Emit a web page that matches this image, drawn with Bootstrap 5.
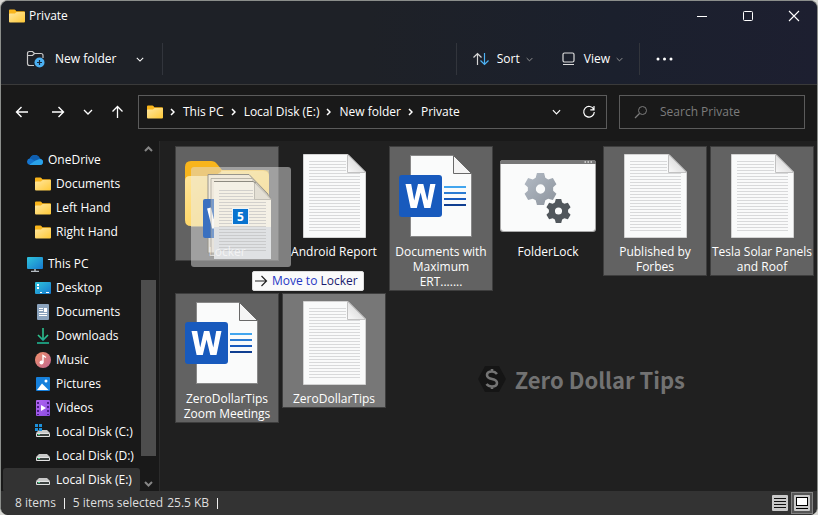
<!DOCTYPE html>
<html lang="en">
<head>
<meta charset="utf-8">
<meta name="viewport" content="width=device-width, initial-scale=1">
<title>Private</title>
<link href="https://cdn.jsdelivr.net/npm/bootstrap@5.3.0/dist/css/bootstrap.min.css" rel="stylesheet">
<style>
html { background: #d8d8d4; }
body { height: 100vh; background: transparent; font-family: "Open Sans", "Noto Sans", sans-serif; font-size: 12px; line-height: 16px; color: #fff; }
svg { display: block; flex: none; }
button { background: none; border: 0; padding: 0; color: inherit; }
a { color: inherit; text-decoration: none; }
.window { background: #191919; border: 1px solid #8b8e8b; border-bottom: 0; border-radius: 8px; }
.topbar { background: linear-gradient(90deg, #1e2127 45%, #1b202d 75%, #1d1f30); border-bottom: 1px solid #3a3a3a; }
.titlebar { height: 29px; padding: 0 17px 0 8px; }
.caption-btns { gap: 34px; }
.commands { height: 54px; padding: 4px 144px 0 25px; }
.divider { width: 1px; height: 32px; background: #32353c; }
.new-btn { gap: 10px; }
.new-caret { margin: 0 2px 0 10px; }
.drop-btn { gap: 6px; }
.drop-icon { margin-right: 2px; }
.dim { color: #a0a0a0; }
.addressrow { height: 56px; padding: 0 12px 2px 14px; gap: 12px; }
.arrows { gap: 18px; width: 111px; }
.box { height: 34px; border: 1px solid #5b5b5b; }
.crumbs { padding-left: 8px; padding-right: 10px; }
.crumbs ol { font-size: 12px; }
.crumbs li { gap: 8px; margin-left: 7px; }
.history { margin-right: 21px; }
.search { width: 186px; padding-left: 14px; gap: 12px; }
.search input { background: none; border: 0; outline: 0; color: #fff; width: 100%; padding: 0; }
.search input::placeholder { color: #7c7c7c; opacity: 1; }
.sidebar { width: 159px; border-right: 1px solid #2b2b2b; }
.tree { padding: 7px 0 0 2px; }
.tree a { display: flex; align-items: center; height: 24px; gap: 5px; padding-left: 32px; white-space: nowrap; border-radius: 3px; }
.tree a.root { padding-left: 24px; }
.tree .group-gap { margin-top: 8px; }
.tree a.active { background: #333; }
.scroll { width: 19px; padding: 5px 3px 4px 1px; }
.track-top { flex: 127 0 0; }
.thumb { flex: 173 0 0; background: #4d4d4d; }
.track-end { flex: 25 0 0; }
.files { background: #202020; padding: 5px 2px 0 15px; }
.tiles { display: grid; grid-template-columns: repeat(auto-fill, 104px); gap: 2px 3px; align-items: start; }
.tile { padding: 0 0 1px; border: 1px solid transparent; text-align: center; line-height: 15px; overflow-wrap: break-word; }
.tile svg { margin: 0 auto 1px; }
.tile.selected { background: #626262; border-color: #3e3e3e; }
.tile.current { background: #777; }
.tile .faint { position: relative; z-index: 3; color: rgba(255, 255, 255, .6); }
.ghost { left: 15px; top: 20px; z-index: 2; }
.tip { left: 76px; top: 124px; height: 20px; padding: 0 5px 0 1px; gap: 4px; z-index: 3; background: #fafafa; border: 1px solid #ddd; border-radius: 2px; color: #2638c4; white-space: nowrap; }
.tip b { font-weight: 400; color: #1b1b6e; }
.brand-mark { right: 132px; bottom: 95px; gap: 8px; color: #727272; font-family: "Noto Sans CJK SC", sans-serif; font-weight: 700; font-size: 22px; line-height: 34px; }
.status { height: 24px; background: #333; color: #dedede; padding: 0 4px 0 14px; border-radius: 0 0 8px 8px; }
.status .bar { width: 1px; height: 11px; background: #eee; }
.mode { width: 22px; height: 22px; display: grid; place-items: center; }
.mode.on { background: #555; border: 1px solid #818181; }
</style>
<script src="https://cdn.jsdelivr.net/npm/bootstrap@5.3.0/dist/js/bootstrap.bundle.min.js"></script>
</head>
<body class="m-0 overflow-hidden">
<svg width="0" height="0" class="position-absolute" aria-hidden="true">
  <defs>
    <linearGradient id="gFold" x1="0" y1="0" x2="1" y2="1"><stop offset="0" stop-color="#ffe7a0"/><stop offset="1" stop-color="#ffc937"/></linearGradient>
    <linearGradient id="gCurl" x1="0" y1="1" x2="1" y2="0"><stop offset="0" stop-color="#fafafa"/><stop offset="1" stop-color="#c9c9c9"/></linearGradient>
    <linearGradient id="gPc" x1="0" y1="0" x2="1" y2="1"><stop offset="0" stop-color="#2fc4dc"/><stop offset="1" stop-color="#1779cf"/></linearGradient>
    <linearGradient id="gMus" x1="0" y1="0" x2="1" y2="1"><stop offset="0" stop-color="#f0906a"/><stop offset="1" stop-color="#bf6690"/></linearGradient>
    <linearGradient id="gVid" x1="0" y1="0" x2="1" y2="1"><stop offset="0" stop-color="#b266f2"/><stop offset="1" stop-color="#8a4be0"/></linearGradient>
    <linearGradient id="gDown" x1="0" y1="0" x2="0" y2="1"><stop offset="0" stop-color="#2fcb8c"/><stop offset="1" stop-color="#1fa596"/></linearGradient>
    <linearGradient id="gGear" x1="0" y1="0" x2="1" y2="1"><stop offset="0" stop-color="#b4bcc6"/><stop offset="1" stop-color="#8d949d"/></linearGradient>
    <symbol id="folder" viewBox="0 0 16 14"><path d="M0 3V1.500Q0 .5 1 .5H5.400Q6 .5 6.400 1L7.400 2.200H15Q16 2.200 16 3.200V6H0Z" fill="#f9b51b"/><path d="M0 5.200Q0 4.400 .8 4.400H5.300Q6 4.400 6.500 3.900L7.200 3.300Q7.400 3.100 8 3.100H15.200Q16 3.100 16 3.900V12.400Q16 13.400 15 13.400H1Q0 13.400 0 12.400Z" fill="url(#gFold)"/></symbol>
    <symbol id="text-doc" viewBox="0 0 96 96"><path d="M17.500 7.500H62L79.500 25V90.500H17.500Z" fill="#f9fafa" stroke="#d2d2d2"/><path d="M23 14H60M23 17H60M23 20H60M23 23H60M23 26H74M23 29H74M23 32H74M23 35H74M23 38H74M23 41H74M23 44H74M23 47H74M23 50H74M23 53H74M23 56H74M23 59H74M23 62H74M23 65H74M23 68H74M23 71H74M23 74H74M23 77H74M23 80H74M23 83H74" transform="translate(0 .5)" stroke="#d8d9da"/><path d="M61.500 7.500V25.500H79.500Z" fill="url(#gCurl)" stroke="#c2c2c2"/></symbol>
    <symbol id="word-doc" viewBox="0 0 96 96"><path d="M17.500 8.500H60.500L78.500 26.500V89.500H17.500Z" fill="#fafbfb" stroke="#888"/><path d="M60.500 8.500V26.500H78.500Z" fill="#f4f4f4" stroke="#696969"/><path d="M51 40H73" stroke="#41a5ee" stroke-width="2"/><path d="M51 46H73" stroke="#2b7cd3" stroke-width="2"/><path d="M51 52H73" stroke="#185abd" stroke-width="2"/><path d="M51 58H73" stroke="#103f91" stroke-width="2"/><rect x="6" y="28" width="43" height="42" rx="3" fill="#185abd"/><path d="M12.500 37H18.200L21.200 53.500L25 37H30.300L34.300 53.500L37.200 37H42.500L37.500 61H31.300L27.600 45.500L23.800 61H17.600Z" fill="#fff"/></symbol>
    <symbol id="drive" viewBox="0 0 16 16"><path d="M4 6H12L15 9H1Z" fill="#c8c8c8"/><rect x="1" y="9" width="14" height="4" rx="1" fill="#e2e2e2"/><rect x="2" y="10" width="12" height="2" fill="#3c4240"/><rect x="3" y="10" width="2" height="1" fill="#41d58a"/></symbol>
    <symbol id="chev" viewBox="0 0 10 6"><path d="M1 1L5 5L9 1" fill="none" stroke="currentColor" stroke-width="1.300"/></symbol>
    <symbol id="gear" viewBox="-12 -12 24 24"><path fill-rule="evenodd" d="M-2.600-11.600H2.600L3.500-8.200L5.600-7L9-8L11.600-3.500L9.200-1.200V1.200L11.600 3.500L9 8L5.600 7L3.500 8.200L2.600 11.600H-2.600L-3.500 8.200L-5.600 7L-9 8L-11.600 3.500L-9.200 1.200V-1.200L-11.600-3.500L-9-8L-5.600-7L-3.500-8.200ZM0-3.400A3.400 3.400 0 1 0 0 3.400A3.400 3.400 0 1 0 0-3.400Z"/></symbol>
  </defs>
</svg>
<div class="window d-flex flex-column vh-100 overflow-hidden">
  <header class="topbar">
    <div class="titlebar d-flex align-items-center justify-content-between">
      <div class="d-flex align-items-center gap-1"><svg width="16" height="14"><use href="#folder"/></svg><span>Private</span></div>
      <div class="caption-btns d-flex align-items-center">
        <button type="button" aria-label="Minimize"><svg width="12" height="12"><path d="M1 6.500H11" stroke="#fff"/></svg></button>
        <button type="button" aria-label="Maximize"><svg width="12" height="12"><rect x="1.500" y="1.500" width="9" height="9" rx="1" fill="none" stroke="#fff"/></svg></button>
        <button type="button" aria-label="Close"><svg width="12" height="12"><path d="M1 1L11 11M11 1L1 11" stroke="#fff" stroke-width="1.100"/></svg></button>
      </div>
    </div>
    <div class="commands d-flex align-items-center">
      <button type="button" class="new-btn d-flex align-items-center">
        <svg width="19" height="18"><path d="M8 15.500H3.500Q1.500 15.500 1.500 13.500V3.500Q1.500 1.500 3.500 1.500H6.500L8.500 3.500H15Q17 3.500 17 5.500V8M1.500 5.500H6.500L8.500 3.500" fill="none" stroke="#c9c9c9" stroke-width="1.200"/><circle cx="13.500" cy="12.500" r="5" fill="#4cb1f3"/><path d="M13.500 10V15M11 12.500H16" stroke="#17273a" stroke-width="1.200"/></svg>
        <span>New folder</span>
        <svg class="new-caret" width="8" height="5"><use href="#chev"/></svg>
      </button>
      <span class="divider ms-3"></span>
      <span class="divider ms-auto"></span>
      <button type="button" class="drop-btn d-flex align-items-center ms-3">
        <svg class="drop-icon" width="16" height="14"><path d="M4.500 13V1.500M.5 5.500L4.500 1.500L8.500 5.500" fill="none" stroke="#d5d5d5" stroke-width="1.200"/><path d="M11.500 1V12.500M7.500 8.500L11.500 12.500L15.500 8.500" fill="none" stroke="#4cb1f3" stroke-width="1.200"/></svg>
        <span>Sort</span><svg width="7" height="5" class="dim"><use href="#chev"/></svg>
      </button>
      <button type="button" class="drop-btn d-flex align-items-center ms-4 ps-1">
        <svg class="drop-icon" width="15" height="14"><rect x="2" y="1" width="11" height="9" rx="1.500" fill="none" stroke="#ddd" stroke-width="1.200"/><path d="M2 12.500H13" stroke="#ddd"/></svg>
        <span>View</span><svg width="7" height="5" class="dim"><use href="#chev"/></svg>
      </button>
      <span class="divider ms-3"></span>
      <button type="button" class="ms-3" aria-label="See more"><svg width="17" height="4"><path d="M2 2H2.010M8.500 2H8.510M15 2H15.010" stroke="#fff" stroke-width="3" stroke-linecap="round"/></svg></button>
    </div>
  </header>

  <div class="addressrow d-flex align-items-center">
    <div class="arrows d-flex align-items-center">
      <button type="button" aria-label="Back"><svg width="14" height="12"><path d="M13 6H2M6.500 1L1.500 6L6.500 11" fill="none" stroke="#fff" stroke-width="1.400"/></svg></button>
      <button type="button" class="ms-1" aria-label="Forward"><svg width="14" height="12"><path d="M1 6H12M7.500 1L12.500 6L7.500 11" fill="none" stroke="#fff" stroke-width="1.400"/></svg></button>
      <button type="button" aria-label="Recent locations"><svg width="10" height="6"><use href="#chev"/></svg></button>
      <button type="button" aria-label="Up"><svg width="13" height="14"><path d="M6.500 13V2M1.500 6.500L6.500 1.500L11.500 6.500" fill="none" stroke="#fff" stroke-width="1.300"/></svg></button>
    </div>
    <nav class="box crumbs flex-grow-1 d-flex align-items-center" aria-label="Address">
      <svg width="16" height="14"><use href="#folder"/></svg>
      <ol class="list-unstyled d-flex mb-0">
        <li class="d-flex align-items-center"><svg width="5" height="8"><path d="M1 1L4 4L1 7" fill="none" stroke="#fff" stroke-width="1.500"/></svg><a href="#">This PC</a></li>
        <li class="d-flex align-items-center"><svg width="5" height="8"><path d="M1 1L4 4L1 7" fill="none" stroke="#fff" stroke-width="1.500"/></svg><a href="#">Local Disk (E:)</a></li>
        <li class="d-flex align-items-center"><svg width="5" height="8"><path d="M1 1L4 4L1 7" fill="none" stroke="#fff" stroke-width="1.500"/></svg><a href="#">New folder</a></li>
        <li class="d-flex align-items-center"><svg width="5" height="8"><path d="M1 1L4 4L1 7" fill="none" stroke="#fff" stroke-width="1.500"/></svg><a href="#">Private</a></li>
      </ol>
      <button type="button" class="history ms-auto" aria-label="Previous locations"><svg width="9" height="6"><use href="#chev"/></svg></button>
      <button type="button" aria-label="Refresh"><svg width="14" height="14"><path d="M11.800 4.500A5.300 5.300 0 1 0 12.300 7M12 1V4.800H8.300" fill="none" stroke="#fff" stroke-width="1.200"/></svg></button>
    </nav>
    <label class="box search d-flex align-items-center">
      <svg width="14" height="14"><circle cx="8.500" cy="5.500" r="4" fill="none" stroke="#7c7c7c"/><path d="M5.500 8.500L1 13" stroke="#7c7c7c" stroke-width="1.200"/></svg>
      <input type="search" placeholder="Search Private" aria-label="Search Private">
    </label>
  </div>

  <main class="d-flex flex-grow-1 overflow-hidden">
    <div class="sidebar d-flex flex-shrink-0">
      <nav class="tree flex-grow-1 overflow-hidden" aria-label="Folders">
        <a class="root" href="#"><svg width="16" height="16"><path d="M3.500 13Q0 12.500 0 9.500Q.3 6.800 3 6.300Q4.500 3 8 3Q11.500 3 12.800 6.500Q16 7.300 16 10Q15.800 12.800 13 13Z" fill="#1474ce"/><path d="M3 6.300Q4.500 3 8 3Q11.500 3 12.800 6.500L8 9Z" fill="#0f5fb0"/><path d="M2.500 12.800L8 8.700L13 7Q16 7.500 16 10Q15.800 12.800 13 13H3.500Z" fill="#2aa3ea"/></svg>OneDrive</a>
        <a href="#"><svg width="16" height="14"><use href="#folder"/></svg>Documents</a>
        <a href="#"><svg width="16" height="14"><use href="#folder"/></svg>Left Hand</a>
        <a href="#"><svg width="16" height="14"><use href="#folder"/></svg>Right Hand</a>
        <a class="root group-gap" href="#"><svg width="16" height="16"><rect y="1" width="16" height="12" rx="1" fill="url(#gPc)"/><path d="M8 13V15M4 15.500H12" stroke="#b5bcc2" stroke-width="1.500"/></svg>This PC</a>
        <a href="#"><svg width="16" height="16"><rect y="2" width="16" height="12" rx="1" fill="url(#gPc)"/><path d="M2 4H4V6H2ZM2 7H4V9H2ZM5 12H7V13H5ZM11 12H14V13H11Z" fill="#fff"/></svg>Desktop</a>
        <a href="#"><svg width="16" height="16"><rect x="2" width="12" height="16" rx="1" fill="#8ba3bd"/><path d="M4 4.500H8M4 6.500H8M4 9.500H12M4 11.500H12" stroke="#fff"/><rect x="9" y="4" width="3" height="4" fill="#fff"/></svg>Documents</a>
        <a href="#"><svg width="16" height="16"><path d="M3 7L8 12L13 7" fill="none" stroke="url(#gDown)" stroke-width="1.600"/><path d="M2 15H14" stroke="#1fb491" stroke-width="1.600"/><path d="M7.200 0H8.800V11H7.200Z" fill="#2cc08f"/></svg>Downloads</a>
        <a href="#"><svg width="16" height="16"><circle cx="8" cy="8" r="8" fill="url(#gMus)"/><circle cx="6.500" cy="10.500" r="2" fill="#fff"/><path d="M8 10.500V3.500L11 5.500" fill="none" stroke="#fff" stroke-width="1.400"/></svg>Music</a>
        <a href="#"><svg width="16" height="16"><rect x="1" y="1" width="14" height="14" rx="1" fill="#1680dc"/><path d="M2 14L7 7.500L13.500 14Z" fill="#fff"/><circle cx="11" cy="5" r="1.500" fill="#fff"/></svg>Pictures</a>
        <a href="#"><svg width="16" height="16"><rect x="1" width="14" height="16" rx="1" fill="url(#gVid)"/><path d="M3 2V15M13 2V15" stroke="#4a1d86" stroke-width="2" stroke-dasharray="2 2"/><path d="M6 5L11 8L6 11Z" fill="#fff"/></svg>Videos</a>
        <a href="#"><svg width="16" height="16"><use href="#drive"/><path d="M0 0H3V3H0ZM4 0H7V3H4ZM0 4H3V7H0ZM4 4H7V7H4Z" fill="#1c91dc"/></svg>Local Disk (C:)</a>
        <a href="#"><svg width="16" height="16"><use href="#drive"/></svg>Local Disk (D:)</a>
        <a class="active" href="#"><svg width="16" height="16"><use href="#drive"/></svg>Local Disk (E:)</a>
      </nav>
      <div class="scroll d-flex flex-column align-items-stretch">
        <svg class="mx-auto" width="9" height="6"><path d="M1 5L4.500 1.500L8 5" fill="none" stroke="#858585" stroke-width="2"/></svg>
        <div class="track-top"></div><div class="thumb"></div><div class="track-end"></div>
        <svg class="mx-auto" width="9" height="6"><path d="M1 1L4.500 4.500L8 1" fill="none" stroke="#858585" stroke-width="2"/></svg>
      </div>
    </div>
    <section class="files flex-grow-1 position-relative" aria-label="Files">
      <div class="tiles">
        <div class="tile selected position-relative">
          <svg width="96" height="96"><path d="M6 20Q6 14 12 14H32Q36 14 38 17L43 23H84Q90 23 90 29V60H6Z" fill="#f8b51c"/><path d="M6 34Q6 29 11 29H34Q37 29 40 26L43 24H84Q90 24 90 30V73Q90 79 84 79H12Q6 79 6 73Z" fill="url(#gFold)"/></svg>
          <span class="faint">Locker</span>
          <svg class="ghost position-absolute m-0" width="100" height="100" aria-label="5 items">
            <rect width="100" height="100" rx="3" fill="#dedede" fill-opacity=".5"/>
            <path d="M0 9H30V60H0Z" fill="#fff0bb" fill-opacity=".4"/><path d="M30 3H78V60H30Z" fill="#fff0bb" fill-opacity=".45"/>
            <path d="M17 7.500H58L77 27V86H17Z" fill="#eeeae1" fill-opacity=".85" stroke="#98958b"/>
            <rect x="12" y="32" width="25" height="39" rx="2" fill="#3a70c0"/><path d="M18 41L23 61L27 43" fill="none" stroke="#fff" stroke-width="4"/>
            <path d="M20 11.500H61L79 30V89H20Z" fill="#efebe2" fill-opacity=".35" stroke="#98958b" stroke-opacity=".6"/>
            <path d="M23 15H63L80 33V92H23Z" fill="#f4f0e5"/><path d="M23 60H80V92H23Z" fill="#dfe1e3"/>
            <path d="M28 23.500H62M28 26.500H62M28 29.500H62M28 32.500H75M28 35.500H75M28 38.500H75M28 41.500H75M28 44.500H75M28 47.500H75M28 50.500H75M28 53.500H75M28 56.500H75M28 59.500H75M28 62.500H75M28 65.500H75M28 68.500H75M28 71.500H75M28 74.500H75M28 77.500H75M28 80.500H75M28 83.500H75" stroke="#bbb" stroke-opacity=".6"/>
            <path d="M63.500 15.500V32.500H80Z" fill="#e3dfd4" stroke="#c2bfb6"/><path d="M23 14.500H62M61 14L65 16" stroke="#8d8a80"/>
            <rect x="41.500" y="41.500" width="16" height="16" fill="#0873cf" stroke="#eef3f8"/>
            <text x="49.500" y="54" text-anchor="middle" font-size="12" font-weight="700" fill="#fff">5</text>
          </svg>
          <div class="tip position-absolute d-flex align-items-center"><svg class="m-0" width="14" height="12"><path d="M1 6H12M7.500 1L12.500 6L7.500 11" fill="none" stroke="#222" stroke-width="1.200"/></svg><span>Move to <b>Locker</b></span></div>
        </div>
        <div class="tile"><svg width="96" height="96"><use href="#text-doc"/></svg>Android Report</div>
        <div class="tile selected"><svg width="96" height="96"><use href="#word-doc"/></svg>Documents with Maximum ERT.......</div>
        <div class="tile"><svg width="96" height="96"><rect y="13" width="96" height="72" rx="3" fill="#a9a9a9"/><path d="M0 17V16Q0 13 3 13H93Q96 13 96 16V17Z" fill="#777"/><path d="M1 17H95V81Q95 84 92 84H4Q1 84 1 81Z" fill="#fafbfb"/><path d="M84.500 15H92" stroke="#ddd" stroke-width="1.500" stroke-dasharray="1.500 1.500"/><svg x="24" y="25" width="33" height="34" fill="url(#gGear)"><use href="#gear"/></svg><svg x="46" y="51" width="25" height="26" fill="#51575c"><use href="#gear"/></svg></svg>FolderLock</div>
        <div class="tile selected"><svg width="96" height="96"><use href="#text-doc"/></svg>Published by Forbes</div>
        <div class="tile selected"><svg width="96" height="96"><use href="#text-doc"/></svg>Tesla Solar Panels<br>and Roof</div>
        <div class="tile selected"><svg width="96" height="96"><use href="#word-doc"/></svg>ZeroDollarTips Zoom Meetings</div>
        <div class="tile selected current"><svg width="96" height="96"><use href="#text-doc"/></svg>ZeroDollarTips</div>
      </div>
      <div class="brand-mark position-absolute d-flex align-items-center">
        <svg width="30" height="28"><path d="M8 1H22L29 14L22 27H8L1 14Z" fill="#151515"/><path d="M20 9Q18 6.500 15 6.500Q10 6.500 10 10Q10 13 15 14Q20 15 20 18Q20 21.500 15 21.500Q11.500 21.500 9.500 19M15 4V7M15 21V24" fill="none" stroke="#747474" stroke-width="2.600"/></svg>
        <span>Zero Dollar Tips</span>
      </div>
    </section>
  </main>

  <footer class="status d-flex align-items-center flex-shrink-0">
    <span>8 items</span><span class="bar mx-2"></span><span>5 items selected</span><span class="ms-1">25.5 KB</span><span class="bar ms-2"></span>
    <button type="button" class="mode ms-auto" aria-label="Details view"><svg width="16" height="16"><rect width="16" height="16" rx="1" fill="#c9c9c9"/><path d="M2 3.500H14M2 6.500H14M2 9.500H14M2 12.500H14" stroke="#111"/></svg></button>
    <button type="button" class="mode on" aria-label="Large icons view"><svg width="16" height="16"><rect width="16" height="16" rx="1" fill="#c9c9c9"/><rect x="2.500" y="2.500" width="11" height="8" fill="#fff" stroke="#000"/><path d="M2 13.500H14" stroke="#000"/></svg></button>
  </footer>
</div>
</body>
</html>
